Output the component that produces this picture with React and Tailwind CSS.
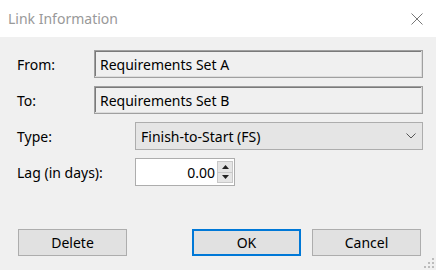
import React from 'react';

const font = { fontFamily: '"Noto Sans", "Open Sans", sans-serif' };

const Field = ({ label, value }) => (
    <div className="flex items-center h-[28px]">
        <span className="w-[77px] text-[14px] text-black">{label}</span>
        <div className="flex-1 h-full flex items-center pl-[5px] border border-[#a0a0a0] shadow-[inset_-1px_-1px_0_#dcdcdc,inset_1px_1px_0_#7a7a7a] bg-[#f0f0f0] text-[14px] text-black">
            {value}
        </div>
    </div>
);

const App = () => {
    return (
        <div className="w-[436px] h-[270px] bg-[#f0f0f0] flex flex-col relative overflow-hidden" style={font}>
            {/* Title bar */}
            <div className="h-[37px] bg-white flex items-center justify-between pl-[8px] pr-[13px]">
                <span className="text-[14px] text-[#999999]">Link Information</span>
                <svg width="12" height="12" viewBox="0 0 12 12" className="text-[#777]">
                    <path d="M0.5 0.5 L11.5 11.5 M11.5 0.5 L0.5 11.5" stroke="currentColor" strokeWidth="1" />
                </svg>
            </div>

            {/* Body */}
            <div className="flex flex-col gap-[8px] pt-[13px] pl-[17px] pr-[13px]">
                <Field label="From:" value="Requirements Set A" />
                <Field label="To:" value="Requirements Set B" />

                <div className="flex items-center h-[28px]">
                    <span className="w-[118px] text-[14px] text-black">Type:</span>
                    <div className="flex-1 h-full flex items-center justify-between pl-[5px] pr-[6px] border border-[#adadad] bg-[#e5e5e5] text-[14px] text-black">
                        <span>Finish-to-Start (FS)</span>
                        <svg width="10" height="6" viewBox="0 0 10 6">
                            <path d="M0.5 0.5 L5 5 L9.5 0.5" fill="none" stroke="#555" strokeWidth="1" />
                        </svg>
                    </div>
                </div>

                <div className="flex items-center h-[28px]">
                    <span className="w-[118px] text-[14px] text-black">Lag (in days):</span>
                    <div className="w-[100px] h-full flex items-center border border-[#adadad] bg-white">
                        <span className="flex-1 text-right pr-[2px] text-[14px] text-black">0.00</span>
                        <div className="flex flex-col w-[16px] h-[22px] mr-[1px]">
                            <div className="flex-1 flex items-center justify-center bg-[#e5e5e5] border border-[#c8c8c8]">
                                <svg width="7" height="4" viewBox="0 0 7 4"><path d="M3.5 0 L7 4 L0 4 Z" fill="#222" /></svg>
                            </div>
                            <div className="flex-1 flex items-center justify-center bg-[#e5e5e5] border border-t-0 border-[#c8c8c8]">
                                <svg width="7" height="4" viewBox="0 0 7 4"><path d="M0 0 L7 0 L3.5 4 Z" fill="#222" /></svg>
                            </div>
                        </div>
                    </div>
                </div>
            </div>

            {/* Buttons */}
            <div className="flex items-center mt-[43px] pl-[18px] pr-[15px]">
                <button className="w-[109px] h-[27px] bg-[#e1e1e1] border border-[#adadad] text-[14px] text-black">Delete</button>
                <div className="flex-1" />
                <button className="w-[109px] h-[27px] bg-[#e1e1e1] border-2 border-[#0078d7] text-[14px] text-black">OK</button>
                <button className="w-[109px] h-[27px] ml-[11px] bg-[#e1e1e1] border border-[#adadad] text-[14px] text-black">Cancel</button>
            </div>

            {/* Resize grip */}
            <svg width="10" height="10" viewBox="0 0 10 10" className="absolute right-[2px] bottom-[2px]">
                <rect x="8" y="0" width="2" height="2" fill="#bcbcbc" />
                <rect x="4" y="4" width="2" height="2" fill="#bcbcbc" />
                <rect x="8" y="4" width="2" height="2" fill="#bcbcbc" />
                <rect x="0" y="8" width="2" height="2" fill="#bcbcbc" />
                <rect x="4" y="8" width="2" height="2" fill="#bcbcbc" />
                <rect x="8" y="8" width="2" height="2" fill="#bcbcbc" />
            </svg>
        </div>
    );
};

export default App;
